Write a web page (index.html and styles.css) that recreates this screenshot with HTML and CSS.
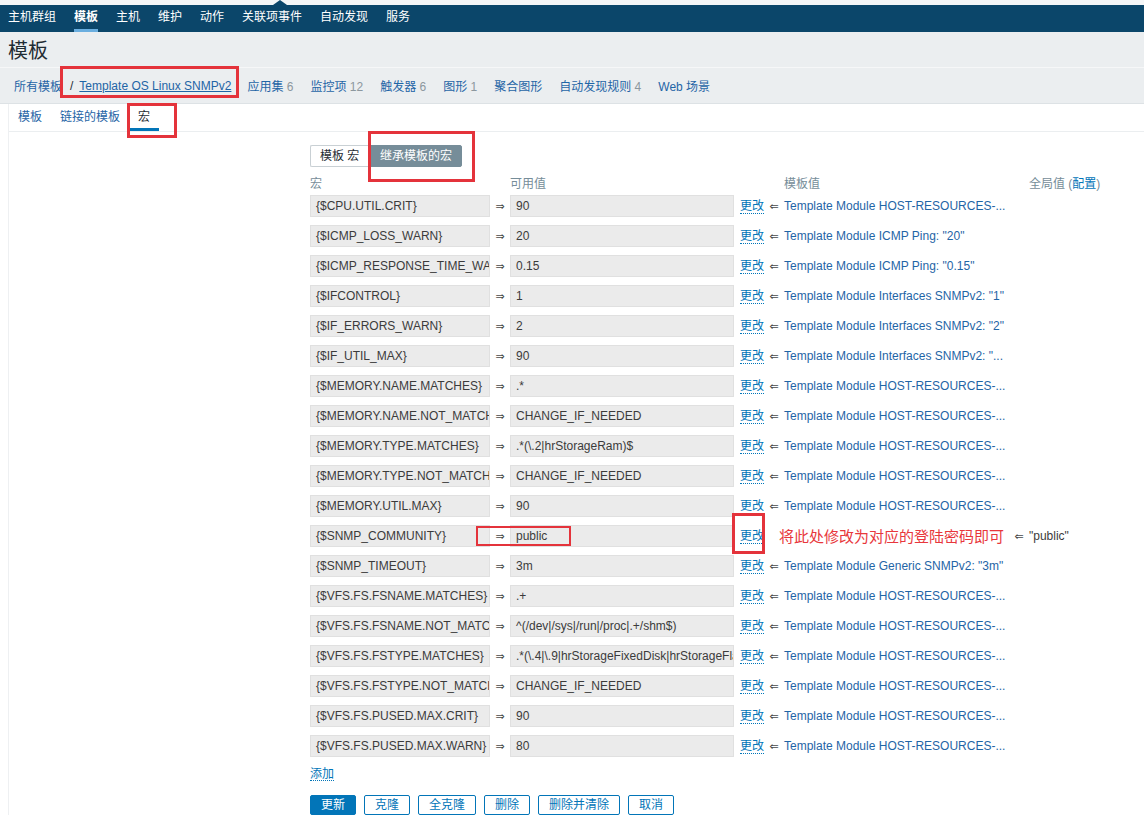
FILE: index.html
```html
<!DOCTYPE html>
<html lang="zh-CN">
<head>
<meta charset="utf-8">
<title>模板</title>
<link rel="stylesheet" href="styles.css">
</head>
<body>
<div class="topstrip"></div>
<nav class="topnav">
  <a class="nav-item">主机群组</a>
  <a class="nav-item active">模板</a>
  <a class="nav-item">主机</a>
  <a class="nav-item">维护</a>
  <a class="nav-item">动作</a>
  <a class="nav-item">关联项事件</a>
  <a class="nav-item">自动发现</a>
  <a class="nav-item">服务</a>
</nav>
<div class="nav-toggle"></div>

<header class="page-title"><h1>模板</h1></header>

<div class="breadcrumbs">
  <a class="bc-link">所有模板</a>
  <span class="bc-sep">/</span>
  <a class="bc-link bc-current">Template OS Linux SNMPv2</a>
  <a class="bc-link">应用集 <span class="cnt">6</span></a>
  <a class="bc-link">监控项 <span class="cnt">12</span></a>
  <a class="bc-link">触发器 <span class="cnt">6</span></a>
  <a class="bc-link">图形 <span class="cnt">1</span></a>
  <a class="bc-link">聚合图形</a>
  <a class="bc-link">自动发现规则 <span class="cnt">4</span></a>
  <a class="bc-link">Web 场景</a>
</div>

<div class="form-container">
  <ul class="tabs">
    <li class="tab">模板</li>
    <li class="tab">链接的模板</li>
    <li class="tab active">宏</li>
  </ul>

  <div class="form-body">
    <div class="label-col"></div>
    <div class="field-col">
      <div class="radio-group">
        <span class="radio">模板 宏</span>
        <span class="radio checked">继承模板的宏</span>
      </div>

      <div class="macro-grid macro-head">
        <span class="c1">宏</span>
        <span class="c3">可用值</span>
        <span class="c6">模板值</span>
        <span class="c8">全局值 (<a class="link">配置</a>)</span>
      </div>

      <div class="macro-grid macro-rows">
        <div class="inp">{$CPU.UTIL.CRIT}</div><span class="arr">⇒</span><div class="inp">90</div><a class="chg">更改</a><span class="arr">⇐</span><a class="tpl">Template Module HOST-RESOURCES-...</a><span></span><span></span>
        <div class="inp">{$ICMP_LOSS_WARN}</div><span class="arr">⇒</span><div class="inp">20</div><a class="chg">更改</a><span class="arr">⇐</span><a class="tpl">Template Module ICMP Ping: "20"</a><span></span><span></span>
        <div class="inp">{$ICMP_RESPONSE_TIME_WARN}</div><span class="arr">⇒</span><div class="inp">0.15</div><a class="chg">更改</a><span class="arr">⇐</span><a class="tpl">Template Module ICMP Ping: "0.15"</a><span></span><span></span>
        <div class="inp">{$IFCONTROL}</div><span class="arr">⇒</span><div class="inp">1</div><a class="chg">更改</a><span class="arr">⇐</span><a class="tpl">Template Module Interfaces SNMPv2: "1"</a><span></span><span></span>
        <div class="inp">{$IF_ERRORS_WARN}</div><span class="arr">⇒</span><div class="inp">2</div><a class="chg">更改</a><span class="arr">⇐</span><a class="tpl">Template Module Interfaces SNMPv2: "2"</a><span></span><span></span>
        <div class="inp">{$IF_UTIL_MAX}</div><span class="arr">⇒</span><div class="inp">90</div><a class="chg">更改</a><span class="arr">⇐</span><a class="tpl">Template Module Interfaces SNMPv2: "...</a><span></span><span></span>
        <div class="inp">{$MEMORY.NAME.MATCHES}</div><span class="arr">⇒</span><div class="inp">.*</div><a class="chg">更改</a><span class="arr">⇐</span><a class="tpl">Template Module HOST-RESOURCES-...</a><span></span><span></span>
        <div class="inp">{$MEMORY.NAME.NOT_MATCHES}</div><span class="arr">⇒</span><div class="inp">CHANGE_IF_NEEDED</div><a class="chg">更改</a><span class="arr">⇐</span><a class="tpl">Template Module HOST-RESOURCES-...</a><span></span><span></span>
        <div class="inp">{$MEMORY.TYPE.MATCHES}</div><span class="arr">⇒</span><div class="inp">.*(\.2|hrStorageRam)$</div><a class="chg">更改</a><span class="arr">⇐</span><a class="tpl">Template Module HOST-RESOURCES-...</a><span></span><span></span>
        <div class="inp">{$MEMORY.TYPE.NOT_MATCHES}</div><span class="arr">⇒</span><div class="inp">CHANGE_IF_NEEDED</div><a class="chg">更改</a><span class="arr">⇐</span><a class="tpl">Template Module HOST-RESOURCES-...</a><span></span><span></span>
        <div class="inp">{$MEMORY.UTIL.MAX}</div><span class="arr">⇒</span><div class="inp">90</div><a class="chg">更改</a><span class="arr">⇐</span><a class="tpl">Template Module HOST-RESOURCES-...</a><span></span><span></span>
        <div class="inp">{$SNMP_COMMUNITY}</div><span class="arr">⇒</span><div class="inp">public</div><a class="chg">更改</a><span></span><span class="note">将此处修改为对应的登陆密码即可</span><span class="arr">⇐</span><span class="glob">"public"</span>
        <div class="inp">{$SNMP_TIMEOUT}</div><span class="arr">⇒</span><div class="inp">3m</div><a class="chg">更改</a><span class="arr">⇐</span><a class="tpl">Template Module Generic SNMPv2: "3m"</a><span></span><span></span>
        <div class="inp">{$VFS.FS.FSNAME.MATCHES}</div><span class="arr">⇒</span><div class="inp">.+</div><a class="chg">更改</a><span class="arr">⇐</span><a class="tpl">Template Module HOST-RESOURCES-...</a><span></span><span></span>
        <div class="inp">{$VFS.FS.FSNAME.NOT_MATCHES}</div><span class="arr">⇒</span><div class="inp">^(/dev|/sys|/run|/proc|.+/shm$)</div><a class="chg">更改</a><span class="arr">⇐</span><a class="tpl">Template Module HOST-RESOURCES-...</a><span></span><span></span>
        <div class="inp">{$VFS.FS.FSTYPE.MATCHES}</div><span class="arr">⇒</span><div class="inp">.*(\.4|\.9|hrStorageFixedDisk|hrStorageFlashMemory)$</div><a class="chg">更改</a><span class="arr">⇐</span><a class="tpl">Template Module HOST-RESOURCES-...</a><span></span><span></span>
        <div class="inp">{$VFS.FS.FSTYPE.NOT_MATCHES}</div><span class="arr">⇒</span><div class="inp">CHANGE_IF_NEEDED</div><a class="chg">更改</a><span class="arr">⇐</span><a class="tpl">Template Module HOST-RESOURCES-...</a><span></span><span></span>
        <div class="inp">{$VFS.FS.PUSED.MAX.CRIT}</div><span class="arr">⇒</span><div class="inp">90</div><a class="chg">更改</a><span class="arr">⇐</span><a class="tpl">Template Module HOST-RESOURCES-...</a><span></span><span></span>
        <div class="inp">{$VFS.FS.PUSED.MAX.WARN}</div><span class="arr">⇒</span><div class="inp">80</div><a class="chg">更改</a><span class="arr">⇐</span><a class="tpl">Template Module HOST-RESOURCES-...</a><span></span><span></span>
      </div>

      <div class="add-row"><a class="chg">添加</a></div>

      <div class="buttons">
        <button class="btn primary">更新</button>
        <button class="btn">克隆</button>
        <button class="btn">全克隆</button>
        <button class="btn">删除</button>
        <button class="btn">删除并清除</button>
        <button class="btn">取消</button>
      </div>
    </div>
  </div>
</div>

<div class="mark mark-bc"></div>
<div class="mark mark-tab"></div>
<div class="mark mark-radio"></div>
<div class="mark mark-val"></div>
<div class="mark mark-chg"></div>
</body>
</html>
```

FILE: styles.css
```css
html, body {
  margin: 0;
  padding: 0;
}

body {
  position: relative;
  min-height: 821px;
  background: #ffffff;
  color: #1f2c33;
  font-family: "Liberation Sans", Arial, "Noto Sans CJK SC", sans-serif;
  font-size: 12px;
}

a {
  cursor: pointer;
}

/* top navigation */
.topstrip {
  height: 5px;
  background: #f4f6f7;
}

.topnav {
  height: 27px;
  background: #0b466a;
  display: flex;
  gap: 18px;
  padding-left: 8px;
}

.nav-item {
  color: #ffffff;
  line-height: 24px;
  height: 24px;
  border-bottom: 3px solid transparent;
  white-space: nowrap;
}

.nav-item.active {
  font-weight: bold;
  border-bottom-color: #6aaedf;
}

.nav-toggle {
  position: absolute;
  left: 273px;
  top: 0;
  width: 0;
  height: 0;
  border-left: 7px solid transparent;
  border-right: 7px solid transparent;
  border-bottom: 5px solid #0b466a;
}

/* page title */
.page-title {
  background: #ebeef0;
  height: 32px;
  padding: 3px 0 0 8px;
}

.page-title h1 {
  margin: 0;
  font-size: 20px;
  font-weight: normal;
  line-height: 32px;
  color: #1f2c33;
}

/* breadcrumbs */
.breadcrumbs {
  background: #ebeef0;
  border-top: 1px solid #f6f7f8;
  border-bottom: 1px solid #dde2e5;
  height: 35px;
  display: flex;
  align-items: center;
  padding-left: 14px;
  white-space: nowrap;
}

.bc-link {
  color: #1f65a6;
  margin-right: 17px;
}

.bc-link:first-child {
  margin-right: 8px;
}

.bc-sep {
  color: #1f2c33;
  margin-right: 6px;
}

.bc-current {
  text-decoration: underline;
  margin-right: 16px;
}

.cnt {
  color: #8c979e;
}

/* form container */
.form-container {
  margin-left: 8px;
  border-left: 1px solid #eef0f2;
  background: #ffffff;
}

.tabs {
  list-style: none;
  margin: 0;
  padding: 0;
  display: flex;
  height: 27px;
  border-bottom: 1px solid #ebeef0;
}

.tab {
  padding: 1px 9px 0;
  line-height: 24px;
  height: 23px;
  color: #1f65a6;
  border-bottom: 3px solid transparent;
}

.tab.active {
  color: #1f2c33;
  border-bottom-color: #0275b8;
}

.form-body {
  display: flex;
  padding-top: 13px;
}

.label-col {
  width: 301px;
  flex: none;
}

.field-col {
  flex: 1;
}

/* radio segmented */
.radio-group {
  display: flex;
  height: 22px;
  margin-bottom: 9px;
}

.radio {
  box-sizing: border-box;
  height: 22px;
  line-height: 20px;
  padding: 0 9px;
  border: 1px solid #c9d0d4;
  color: #1f2c33;
  background: #ffffff;
  white-space: nowrap;
}

.radio:first-child {
  width: 60px;
  padding: 0 0 0 9px;
  border-radius: 2px 0 0 2px;
  border-right: none;
}

.radio.checked {
  background: #768d99;
  border-color: #768d99;
  color: #ffffff;
  border-radius: 0 2px 2px 0;
}

/* macro grid */
.macro-grid {
  display: grid;
  grid-template-columns: 180px 20px 224px 30px 20px 225px 20px auto;
  align-items: center;
}

.macro-head {
  height: 16px;
  line-height: 16px;
  color: #768d99;
  margin-bottom: 3px;
}

.macro-head .c1 { grid-column: 1; }
.macro-head .c3 { grid-column: 3; }
.macro-head .c6 { grid-column: 6; }
.macro-head .c8 { grid-column: 8; white-space: nowrap; }

.link {
  color: #0275b8;
}

.macro-rows {
  row-gap: 8px;
}

.inp {
  box-sizing: border-box;
  height: 22px;
  line-height: 20px;
  padding: 0 5px;
  background: #ebebeb;
  border: 1px solid #e0e0e0;
  color: #3b3b3b;
  white-space: nowrap;
  overflow: hidden;
}

.arr {
  font-family: "DejaVu Sans", sans-serif;
  font-size: 11px;
  color: #4a4a4a;
  text-align: center;
}

.chg {
  justify-self: start;
  margin-left: 6px;
  color: #0275b8;
  line-height: 14px;
  border-bottom: 1px dotted #0275b8;
}

.tpl {
  color: #1f65a6;
  white-space: nowrap;
}

.note {
  margin-left: -5px;
  color: #e8373c;
  font-size: 15px;
  white-space: nowrap;
  font-family: "Noto Sans CJK SC", sans-serif;
  line-height: 20px;
}

.glob {
  color: #3b3b3b;
  white-space: nowrap;
}

.add-row {
  margin-top: 10px;
  height: 14px;
  display: flex;
}

.add-row .chg {
  margin-left: 0;
}

.buttons {
  display: flex;
  gap: 8px;
  margin-top: 14px;
}

.btn {
  box-sizing: border-box;
  height: 20px;
  padding: 0 10px;
  font-family: "Liberation Sans", Arial, "Noto Sans CJK SC", sans-serif;
  font-size: 12px;
  line-height: 18px;
  color: #0275b8;
  background: #ffffff;
  border: 1px solid #0275b8;
  border-radius: 2px;
}

.btn.primary {
  background: #0275b8;
  color: #ffffff;
}

/* red annotation boxes */
.mark {
  position: absolute;
  border: 3px solid #e4333b;
  box-sizing: border-box;
  pointer-events: none;
}

.mark-bc { left: 60px; top: 66px; width: 179px; height: 32px; }
.mark-tab { left: 127px; top: 103px; width: 50px; height: 35px; }
.mark-radio { left: 368px; top: 131px; width: 107px; height: 51px; }
.mark-val { left: 476px; top: 526px; width: 95px; height: 20px; border-width: 2px; }
.mark-chg { left: 732px; top: 513px; width: 33px; height: 41px; }
```
